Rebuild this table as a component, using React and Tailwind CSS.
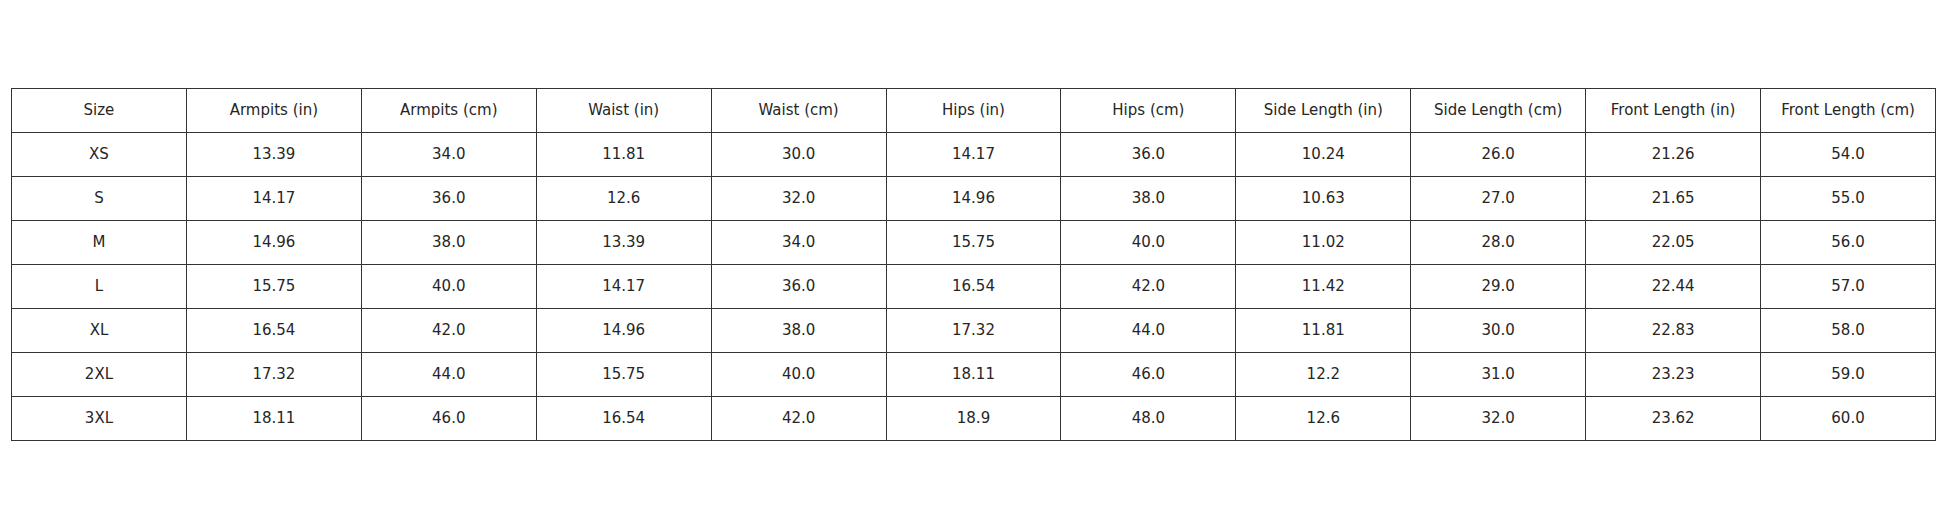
import React from 'react';

const headers = [
  'Size', 'Armpits (in)', 'Armpits (cm)', 'Waist (in)', 'Waist (cm)', 'Hips (in)', 'Hips (cm)',
  'Side Length (in)', 'Side Length (cm)', 'Front Length (in)', 'Front Length (cm)',
];

const rows = [
  ['XS', '13.39', '34.0', '11.81', '30.0', '14.17', '36.0', '10.24', '26.0', '21.26', '54.0'],
  ['S', '14.17', '36.0', '12.6', '32.0', '14.96', '38.0', '10.63', '27.0', '21.65', '55.0'],
  ['M', '14.96', '38.0', '13.39', '34.0', '15.75', '40.0', '11.02', '28.0', '22.05', '56.0'],
  ['L', '15.75', '40.0', '14.17', '36.0', '16.54', '42.0', '11.42', '29.0', '22.44', '57.0'],
  ['XL', '16.54', '42.0', '14.96', '38.0', '17.32', '44.0', '11.81', '30.0', '22.83', '58.0'],
  ['2XL', '17.32', '44.0', '15.75', '40.0', '18.11', '46.0', '12.2', '31.0', '23.23', '59.0'],
  ['3XL', '18.11', '46.0', '16.54', '42.0', '18.9', '48.0', '12.6', '32.0', '23.62', '60.0'],
];

export default function App() {
  return (
    <div className="w-[1946px] h-[527px] bg-white pt-[88px] pl-[11px] font-['DejaVu_Sans',sans-serif] text-[15px] text-[#262626]">
      <table className="w-[1925px] table-fixed border-collapse">
        <thead>
          <tr>
            {headers.map((h) => (
              <th key={h} className="h-[44px] border border-[#333] font-normal text-center p-0">{h}</th>
            ))}
          </tr>
        </thead>
        <tbody>
          {rows.map((r) => (
            <tr key={r[0]}>
              {r.map((c, i) => (
                <td key={i} className="h-[44px] border border-[#333] text-center p-0">{c}</td>
              ))}
            </tr>
          ))}
        </tbody>
      </table>
    </div>
  );
}
